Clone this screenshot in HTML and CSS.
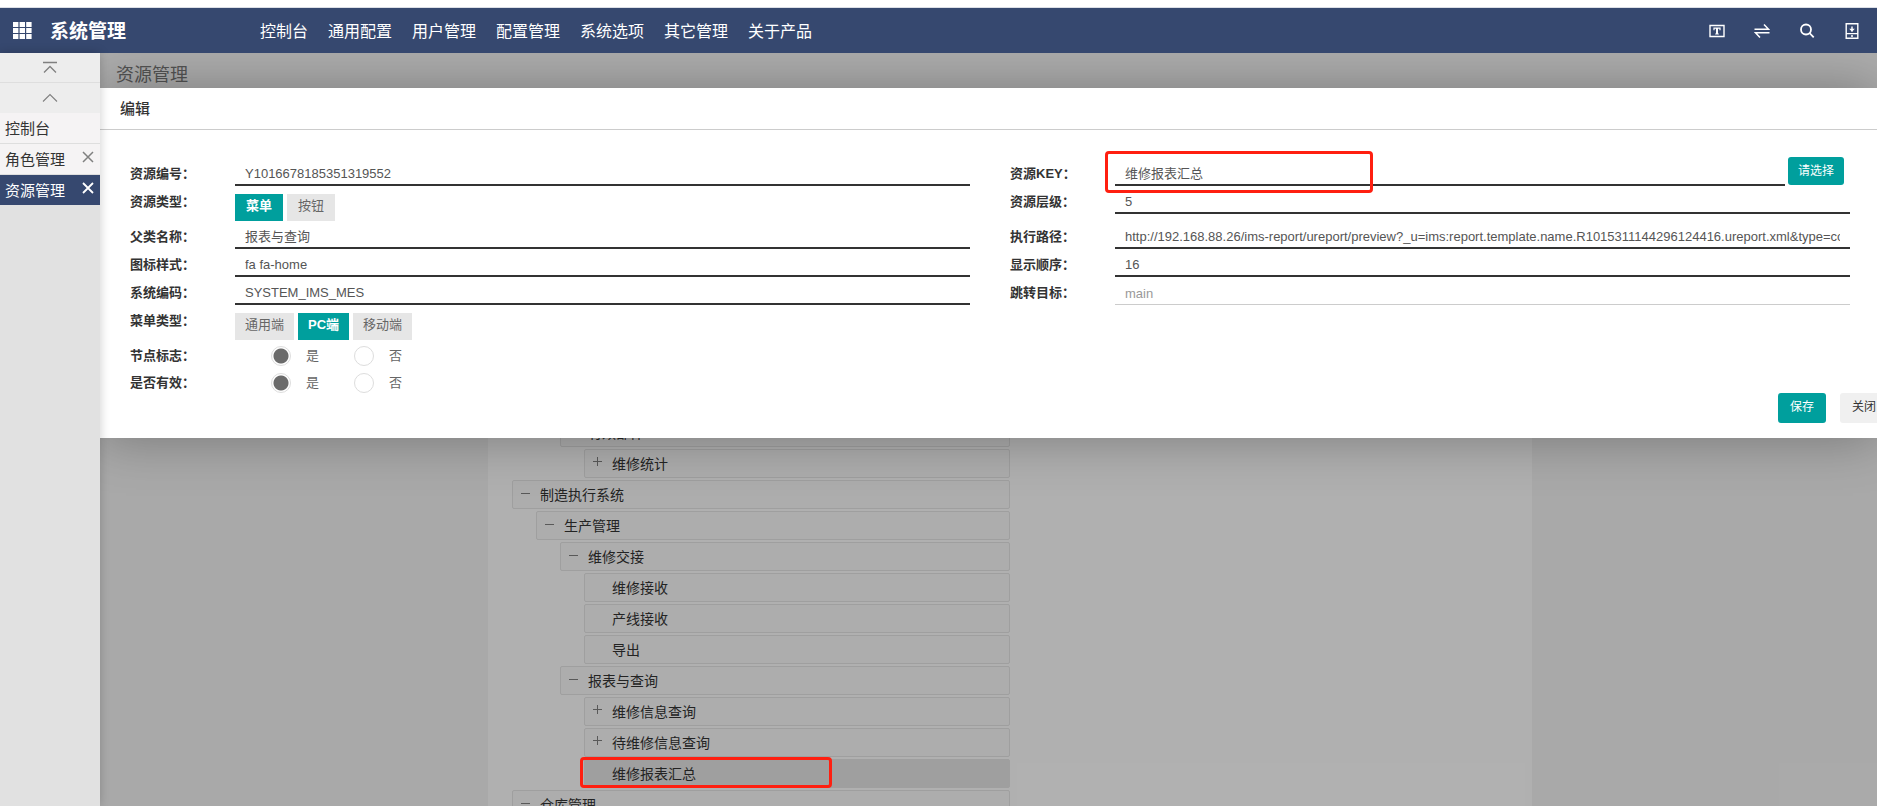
FILE: index.html
```
<!DOCTYPE html>
<html lang="zh-CN">
<head>
<meta charset="utf-8">
<title>系统管理</title>
<link rel="stylesheet" href="styles.css">
</head>
<body>
<div class="app">
  <header class="topbar">
    <button class="icon-btn apps" aria-label="应用">
      <svg width="20" height="18" viewBox="0 0 20 18" fill="#fff"><path d="M0 0h5.4v5H0zM6.6 0H12v5H6.6zM13.2 0h5.4v5h-5.4zM0 6h5.4v5H0zM6.6 6H12v5H6.6zM13.2 6h5.4v5h-5.4zM0 12h5.4v5H0zM6.6 12H12v5H6.6zM13.2 12h5.4v5h-5.4z"/></svg>
    </button>
    <h1 class="brand">系统管理</h1>
    <nav class="nav">
      <a href="#">控制台</a><a href="#">通用配置</a><a href="#">用户管理</a><a href="#">配置管理</a><a href="#">系统选项</a><a href="#">其它管理</a><a href="#">关于产品</a>
    </nav>
    <div class="tools">
      <button class="icon-btn" aria-label="主题"><svg width="16" height="16" viewBox="0 0 16 16" fill="none" stroke="#fff"><path d="M1 2.500h14v11H1z" stroke-width="1.400"/><path d="M8 5v6" stroke-width="2"/><path d="M5 7.200V5.200h6v2M6.200 11h3.600" stroke-width="1.200"/></svg></button>
      <button class="icon-btn" aria-label="切换"><svg width="16" height="16" viewBox="0 0 16 16" fill="none" stroke="#fff" stroke-width="1.5"><path d="M0.500 6.300H14.500L10 1.500M15.500 9.700H1.500L6 14.500"/></svg></button>
      <button class="icon-btn" aria-label="搜索"><svg width="16" height="16" viewBox="0 0 16 16" fill="none" stroke="#fff" stroke-width="1.8"><circle cx="7" cy="6.500" r="5"/><path d="M10.500 10l4.200 4.400"/></svg></button>
      <button class="icon-btn" aria-label="下载"><svg width="16" height="16" viewBox="0 0 16 16" fill="none" stroke="#fff" stroke-width="1.4"><path d="M2.200 0.700h11.600v14.600H2.200zM2.200 10.600h11.600M8 3.500v5M7 13h2"/><path d="M5.200 5.800h5.600L8 8.800z" fill="#fff" stroke="none"/></svg></button>
    </div>
  </header>

  <div class="body">
    <aside class="side">
      <button class="side-ctl" aria-label="顶部"><svg width="16" height="14" viewBox="0 0 16 14" fill="none" stroke="#808080" stroke-width="1.300"><path d="M1 1.500h14M2 11.500l6-6 6 6"/></svg></button>
      <button class="side-ctl" aria-label="向上"><svg width="16" height="10" viewBox="0 0 16 10" fill="none" stroke="#808080" stroke-width="1.100"><path d="M1 8.500l7-7 7 7"/></svg></button>
      <div class="tab"><a href="#">控制台</a></div>
      <div class="tab"><a href="#">角色管理</a><button class="tab-close" aria-label="关闭"><svg width="12" height="12" viewBox="0 0 12 12" fill="none" stroke="currentColor" stroke-width="1.500"><path d="M1 1l10 10M11 1L1 11"/></svg></button></div>
      <div class="tab active"><a href="#">资源管理</a><button class="tab-close" aria-label="关闭"><svg width="12" height="12" viewBox="0 0 12 12" fill="none" stroke="currentColor" stroke-width="1.800"><path d="M1 1l10 10M11 1L1 11"/></svg></button></div>
    </aside>

    <main class="main">
      <h2 class="page-title">资源管理</h2>
      <section class="panel">
        <ul class="tree">
          <li class="node lv3"><i></i>有效部件</li>
          <li class="node lv4"><i class="plus"></i>维修统计</li>
          <li class="node lv1"><i class="minus"></i>制造执行系统</li>
          <li class="node lv2"><i class="minus"></i>生产管理</li>
          <li class="node lv3"><i class="minus"></i>维修交接</li>
          <li class="node lv4"><i></i>维修接收</li>
          <li class="node lv4"><i></i>产线接收</li>
          <li class="node lv4"><i></i>导出</li>
          <li class="node lv3"><i class="minus"></i>报表与查询</li>
          <li class="node lv4"><i class="plus"></i>维修信息查询</li>
          <li class="node lv4"><i class="plus"></i>待维修信息查询</li>
          <li class="node lv4 selected"><i></i>维修报表汇总</li>
          <li class="node lv1"><i class="minus"></i>仓库管理</li>
        </ul>
      </section>
      <div class="mask"></div>
      <div class="mark mark-node"></div>

      <form class="dialog">
        <h3 class="dialog-title">编辑</h3>
        <div class="fields">
          <div class="col">
            <div class="row"><label for="code">资源编号：</label><input class="text" id="code" value="Y1016678185351319552"></div>
            <div class="row tall"><span class="label">资源类型：</span><div class="pills"><button type="button" class="pill on">菜单</button><button type="button" class="pill">按钮</button></div></div>
            <div class="row"><label for="parent">父类名称：</label><input class="text" id="parent" value="报表与查询"></div>
            <div class="row"><label for="icon">图标样式：</label><input class="text" id="icon" value="fa fa-home"></div>
            <div class="row"><label for="sys">系统编码：</label><input class="text" id="sys" value="SYSTEM_IMS_MES"></div>
            <div class="row tall"><span class="label">菜单类型：</span><div class="pills"><button type="button" class="pill">通用端</button><button type="button" class="pill on">PC端</button><button type="button" class="pill">移动端</button></div></div>
            <div class="row short"><span class="label">节点标志：</span><div class="radios"><label><input type="radio" name="leaf" checked>是</label><label><input type="radio" name="leaf">否</label></div></div>
            <div class="row short"><span class="label">是否有效：</span><div class="radios"><label><input type="radio" name="valid" checked>是</label><label><input type="radio" name="valid">否</label></div></div>
          </div>
          <div class="col">
            <div class="row"><label for="key">资源KEY：</label><input class="text" id="key" value="维修报表汇总"><button type="button" class="btn pick">请选择</button></div>
            <div class="row tall"><label for="level">资源层级：</label><input class="text" id="level" value="5"></div>
            <div class="row"><label for="path">执行路径：</label><input class="text" id="path" value="http://192.168.88.26/ims-report/ureport/preview?_u=ims:report.template.name.R1015311144296124416.ureport.xml&amp;type=common"></div>
            <div class="row"><label for="order">显示顺序：</label><input class="text" id="order" value="16"></div>
            <div class="row"><label for="target">跳转目标：</label><input class="text light" id="target" placeholder="main"></div>
            <div class="mark mark-key"></div>
          </div>
        </div>
        <div class="actions"><button type="button" class="btn">保存</button><button type="button" class="btn plain">关闭</button></div>
      </form>
    </main>
  </div>
</div>
</body>
</html>
```
FILE: styles.css
```
* { box-sizing: border-box; margin: 0; padding: 0; }
html, body { height: 100%; }
body {
  overflow: hidden;
  background: #fff;
  color: #333;
  font: 13px/24px "Liberation Sans", "Noto Sans CJK SC", sans-serif;
}
button, input { font: inherit; color: inherit; border: 0; background: none; outline: 0; }
a { color: inherit; text-decoration: none; }
.app { display: flex; flex-direction: column; height: 100vh; padding-top: 7px; }

.topbar {
  display: flex;
  align-items: center;
  flex: none;
  height: 46px;
  padding: 0 17px 0 13px;
  border-top: 1px solid #dcdfe6;
  background: #36486f;
  color: #fff;
}
.icon-btn { display: flex; }
.brand { width: 210px; margin-left: 17px; padding-top: 2px; font-size: 19px; }
.nav { display: flex; gap: 20px; padding-top: 2px; font-size: 16px; white-space: nowrap; }
.tools { display: flex; gap: 29px; margin-left: auto; }

.body { display: flex; flex: 1; min-height: 0; }
.side {
  position: relative;
  z-index: 3;
  flex: none;
  width: 100px;
  background: #e1e1e1;
  box-shadow: 0 0 10px rgba(0, 0, 0, .2);
}
.side-ctl {
  display: flex;
  align-items: center;
  justify-content: center;
  width: 100%;
  height: 30px;
  border-bottom: 1px solid #dedede;
  background: #ededed;
}
.side-ctl + .side-ctl { border-color: #ededed; }
.tab {
  display: flex;
  justify-content: space-between;
  height: 31px;
  padding: 0 6px 0 5px;
  border-bottom: 1px solid #dedede;
  background: #f5f3f4;
  font-size: 15px;
  line-height: 31px;
}
.tab-close { display: flex; padding-top: 7px; color: #808080; }
.tab.active { height: 30px; border: 0; background: #36486f; color: #fff; }
.tab.active .tab-close { color: #fff; }

.main { position: relative; flex: 1; min-width: 0; overflow: hidden; background: #f3f3f3; }
.page-title {
  height: 44px;
  padding-left: 16px;
  background: #f7f7f7;
  color: #777;
  font-size: 18px;
  font-weight: 400;
  line-height: 44px;
}
.panel {
  display: grid;
  grid-template-columns: 1fr 1fr;
  margin: 0 345px 0 388px;
  padding: 321px 24px 0;
  background: #fdfdfd;
}
.tree { display: grid; gap: 2px; list-style: none; }
.node {
  display: flex;
  height: 29px;
  padding-left: 8px;
  border: 1px solid #e4e4e4;
  border-radius: 2px;
  background: #f8f8f8;
  font-size: 14px;
  line-height: 29px;
}
.node i { position: relative; width: 19px; }
.lv2 { margin-left: 24px; }
.lv3 { margin-left: 48px; }
.lv4 { margin-left: 72px; }
.selected { background: #e4e4e4; }
.minus::before, .plus::before, .plus::after { content: ""; position: absolute; background: #808080; }
.minus::before, .plus::before { left: 0; top: 12px; width: 9px; height: 1px; }
.plus::before { top: 11px; }
.plus::after { left: 4px; top: 7px; width: 1px; height: 9px; }
.mask { position: absolute; inset: 0; background: rgba(0, 0, 0, .3); }

.dialog {
  position: absolute;
  top: 35px;
  left: 0;
  right: 0;
  padding-bottom: 15px;
  background: #fff;
  box-shadow: 1px 1px 50px rgba(0, 0, 0, .3);
}
.dialog-title {
  height: 42px;
  padding-left: 20px;
  border-bottom: 1px solid #ccc;
  font-size: 15px;
  font-weight: 500;
  line-height: 42px;
}
.fields { display: grid; grid-template-columns: 1fr 1fr; gap: 40px; padding: 32px 27px 0 30px; }
.col { position: relative; min-width: 0; }
.row { display: flex; align-items: flex-start; height: 28px; }
.row.tall { height: 35px; }
.row.short { height: 27px; }
.row > label, .label { flex: none; width: 105px; font-weight: 700; }
.text { flex: 1; min-width: 0; height: 24px; padding: 2px 10px 0; border-bottom: 2px solid #333; color: #555; }
.text.light { border-bottom: 1px solid #ccc; }
.text::placeholder { color: #999; }
.pills { display: flex; gap: 4px; padding-top: 4px; }
.pill { min-width: 48px; height: 27px; padding: 0 10px 3px; background: #e6e6e6; color: #666; }
.pill.on { background: #009f9d; color: #fff; font-weight: 700; }
.radios { display: flex; gap: 35px; padding-left: 36px; color: #666; }
.radios label { display: flex; align-items: center; gap: 15px; }
.radios input {
  width: 20px;
  height: 20px;
  appearance: none;
  border: 1px solid #ddd;
  border-radius: 50%;
}
.radios input:checked { background: radial-gradient(circle, #6b6b6b 7px, #fff 8px); }
.btn { height: 30px; padding: 0 12px 2px; border-radius: 3px; background: #009f9d; color: #fff; font-size: 12px; }
.btn.pick { height: 28px; margin: -5px 6px 0 3px; padding: 0 10px; }
.btn.plain { background: #f0f0f0; color: #333; }
.actions { display: flex; justify-content: flex-end; gap: 14px; margin: -5px -11px 0 0; }
.mark { position: absolute; border: 3px solid #ff1f10; border-radius: 4px; }
.mark-key { top: -11px; left: 95px; width: 268px; height: 42px; }
.mark-node { top: 704px; left: 480px; width: 252px; height: 31px; }
```
